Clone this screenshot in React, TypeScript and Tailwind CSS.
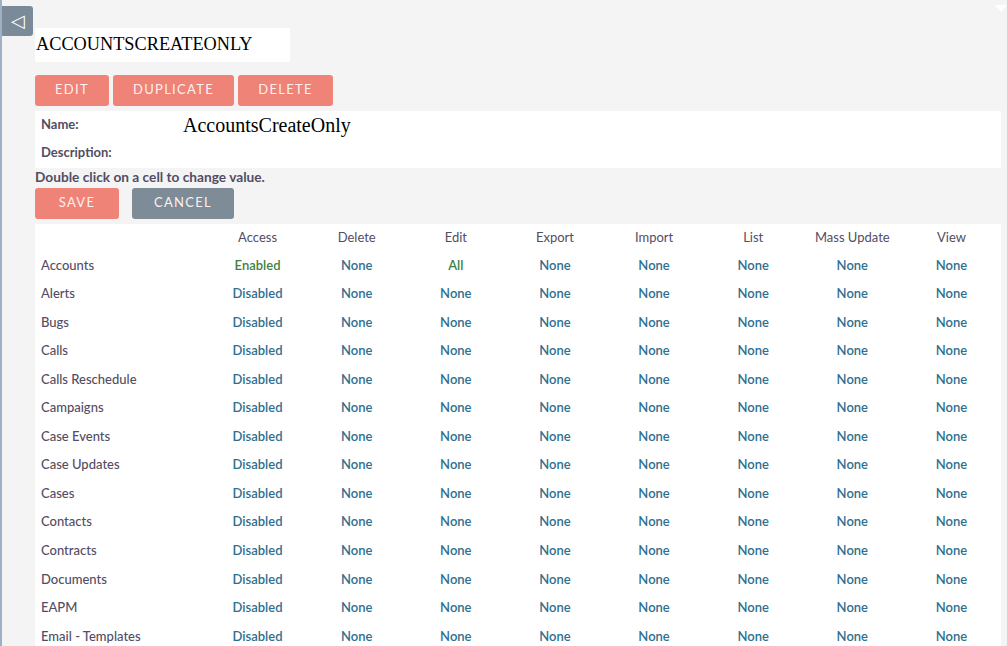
import React from "react";

const modules = [
  "Accounts",
  "Alerts",
  "Bugs",
  "Calls",
  "Calls Reschedule",
  "Campaigns",
  "Case Events",
  "Case Updates",
  "Cases",
  "Contacts",
  "Contracts",
  "Documents",
  "EAPM",
  "Email - Templates",
];

const columns = ["Access", "Delete", "Edit", "Export", "Import", "List", "Mass Update", "View"];

const cellValue = (mod: string, col: string) => {
  if (col === "Access") return mod === "Accounts" ? "Enabled" : "Disabled";
  if (mod === "Accounts" && col === "Edit") return "All";
  return "None";
};

const isGreen = (v: string) => v === "Enabled" || v === "All";

const ActionButton = ({ label, gray, width }: { label: string; gray?: boolean; width: string }) => (
  <button
    className={`${width} h-[31px] rounded-[3px] pb-[1px] text-[13px] tracking-[1.3px] text-[#fdf0ee] ${
      gray ? "bg-[#7e8c98]" : "bg-[#f08377]"
    }`}
  >
    {label}
  </button>
);

export default function App() {
  return (
    <div className="relative min-h-[646px] bg-[#f4f4f4] font-['Lato','Liberation_Sans',sans-serif] text-[#534d64] border-l-2 border-[#9eb0c4]">
      {/* sidebar toggle */}
      <div className="absolute left-0 top-[6px] flex h-[30px] w-[31px] items-center justify-center rounded-r-[3px] bg-[#7b8a98] pb-[1px] text-[18px] text-white">
        ◁
      </div>
      {/* corner triangle */}
      <div className="absolute right-0 top-[5px] h-0 w-0 border-x-[6px] border-t-[7px] border-x-transparent border-t-white" />

      <div className="pl-[33px] pr-[6px] pt-[28px]">
        <div className="flex h-[34px] w-[255px] items-center bg-white pl-[1px] font-['Liberation_Serif',serif] text-[18.3px] text-black">
          ACCOUNTSCREATEONLY
        </div>

        <div className="mt-[13px] flex gap-[4px]">
          <ActionButton label="EDIT" width="w-[74px]" />
          <ActionButton label="DUPLICATE" width="w-[121px]" />
          <ActionButton label="DELETE" width="w-[95px]" />
        </div>

        <div className="mt-[5px] h-[57px] bg-white px-[6px] pt-[4px] text-[13px] font-bold">
          <div className="flex h-[28px] items-start">
            <span className="w-[142px]">Name:</span>
            <span className="-mt-[2px] font-['Liberation_Serif',serif] text-[20px] font-normal leading-[24px] text-black">
              AccountsCreateOnly
            </span>
          </div>
          <div>Description:</div>
        </div>

        <div className="text-[13.7px] font-bold leading-[18px]">Double click on a cell to change value.</div>

        <div className="mt-[2px] flex gap-[13px]">
          <ActionButton label="SAVE" width="w-[84px]" />
          <ActionButton label="CANCEL" gray width="w-[102px]" />
        </div>

        <table className="mt-[5px] w-full table-fixed bg-white text-[13px]">
          <colgroup>
            <col className="w-[173px]" />
            {columns.map((c) => (
              <col key={c} />
            ))}
          </colgroup>
          <thead>
            <tr className="h-[27px]">
              <th />
              {columns.map((c) => (
                <th key={c} className="pt-[1px] text-center font-normal">
                  {c}
                </th>
              ))}
            </tr>
          </thead>
          <tbody>
            {modules.map((m) => (
              <tr key={m} className="h-[28.55px]">
                <td className="pl-[6px] font-medium">{m}</td>
                {columns.map((c) => {
                  const v = cellValue(m, c);
                  return (
                    <td
                      key={c}
                      className={`text-center font-semibold ${isGreen(v) ? "text-[#3f7f3f]" : "text-[#2f6f8f]"}`}
                    >
                      {v}
                    </td>
                  );
                })}
              </tr>
            ))}
          </tbody>
        </table>
      </div>
    </div>
  );
}
